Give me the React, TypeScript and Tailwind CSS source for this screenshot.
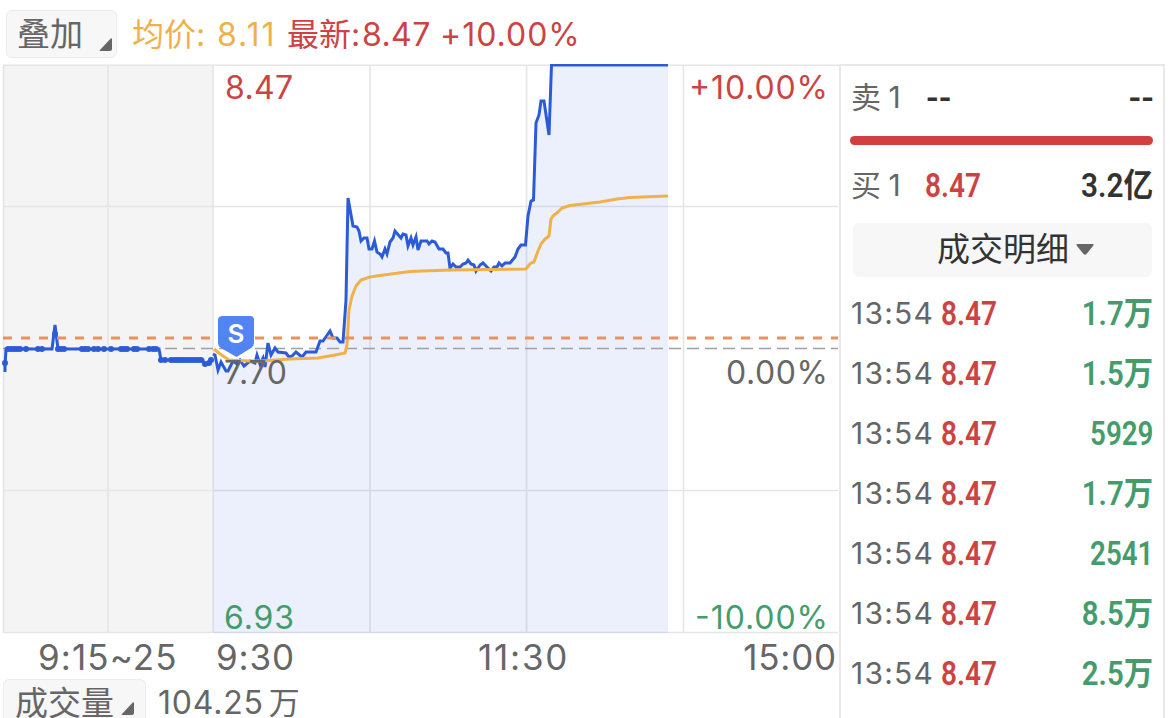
import { clsx } from "clsx";

const trades = [
    { time: "13:54", price: "8.47", volume: "1.7万" },
    { time: "13:54", price: "8.47", volume: "1.5万" },
    { time: "13:54", price: "8.47", volume: "5929" },
    { time: "13:54", price: "8.47", volume: "1.7万" },
    { time: "13:54", price: "8.47", volume: "2541" },
    { time: "13:54", price: "8.47", volume: "8.5万" },
    { time: "13:54", price: "8.47", volume: "2.5万" },
];

const auctionLine =
    "5,372 5,366 6,349 52,349 55,325 58,349 159,349 161,360 203,360 204,364 209,364 212,359";

const priceLine =
    "213,354 215,355 218,370 221,362 226,371 228,371 233,361 237,364 240,360 244,366 250,361 255,363 257,355 260,364 263,358 265,367 268,343 271,355 275,348 278,352 286,353 289,357 292,356 296,352 302,357 306,352 316,352 320,341 323,341 330,331 333,338 337,338 340,342 343,342 346,300 348,198 353,226 357,227 359,231 361,241 364,238 367,238 369,249 372,249 374.5,241 377,252 380,254 382,257 385,249 387,254 390,242 393,238 395,231 401,238 403,234 406,235 408,246 411,238 413,245 416,237 418,250 421,241 427,241 429,244 432,241 435,242 439,249 443,249 446,253 448,253 450,268 453,264 456,267 460,267 463,264 466,263 468,260 471,264 474,265 476,271 480,265 483,263 486,266 491,271 494,267 497,267 499,263 502,266 505,263 510,263 515,257 518,249 521,245 525.5,245 528,216 531,201 533.5,200 536,123 539,115 541,101 544,101 549,135 551.5,65 668,65";

const averageLine =
    "214,349 220,354 229,360 250,361 262,361 290,359 318,358 335,355 345,353 347,345 349,310 352,296 356,286 361,280 370,277 380,275.5 410,271.5 450,270 526,269 529,265 531,263 534,262 538,251 541,244 545,239 549,236 551,219 553,216 558,212 562,208 570,205.5 600,202 617,199 630,197.5 668,196";

// [x, y] of every auction tick
const ticks = [
    [5, 363], [8, 349], [11, 349], [14, 349], [17, 349], [20, 349], [26, 349], [38, 349], [42, 349],
    [55, 334], [58, 349], [61, 349], [64, 349], [82, 349], [85, 349], [88, 349], [94, 349], [98, 349],
    [104, 349], [111, 349], [121, 349], [124, 349], [127, 349], [134, 349], [137, 349], [149, 349],
    [153, 349], [156, 349], [161, 360], [165, 360], [171, 360], [174, 360], [177, 360], [180, 360],
    [183, 360], [186, 360], [189, 360], [192, 360], [195, 360], [198, 360], [201, 360], [205, 364],
    [209, 363], [211, 360],
];

function Corner({ className }: { className?: string }) {
    return (
        <svg viewBox="0 0 13 13" className={clsx("h-[13px] w-[13px]", className)}>
            <path d="M13 1v10a2 2 0 0 1-2 2H1.5Q0 13 1 12L11.500.7Q13-.5 13 1Z" fill="#666" />
        </svg>
    );
}

function Chart() {
    return (
        <svg viewBox="0 64 839 570" className="block h-[570px] w-[839px] shrink-0 font-['Inter',sans-serif]">
            <rect x="3" y="65" width="210" height="568" fill="#f4f4f4" />

            <g stroke="#e5e5e5" strokeWidth="1.6">
                <path d="M3 65.200H840M3 206.500H838M3 490.500H838M3 632.500H838" />
                <path d="M3.500 65V633M108 65V633M213 65V633M370 65V633M526.500 65V633M683.500 65V633" />
            </g>

            <polygon points={`213,633 ${priceLine} 668,633`} fill="#4169e1" fillOpacity="0.1" />

            <path d="M3 348.500H838" stroke="#a0a0a0" strokeWidth="1.500" strokeDasharray="12 6" />

            <g fill="none" stroke="#2b5cd6" strokeWidth="3">
                <polyline points={auctionLine} />
                <polyline points={priceLine} />
            </g>
            {ticks.map(([x, y], i) => (
                <circle key={i} cx={x} cy={y} r="3" fill="#2b5cd6" />
            ))}
            <polyline points={averageLine} fill="none" stroke="#f0b14a" strokeWidth="3" strokeLinejoin="round" />
            <path d="M3 338H838" stroke="#e8935f" strokeWidth="2.800" strokeDasharray="9 9" />

            {/* Sell marker */}
            <path d="M223 316H250Q254 316 254 320V343Q254 346 251 348L236.500 357L221 348Q218 346 218 343V320Q218 316 223 316Z" fill="#4c7ff5" fillOpacity="0.96" />
            <text x="236" y="343" textAnchor="middle" fontSize="26" fontWeight="600" fill="#fff">S</text>

            {/* Scale labels */}
            <g fontSize="32">
                <text x="225" y="98.500" textLength="68" fill="#cd4343">8.47</text>
                <text x="224" y="383.500" textLength="63" fill="#666">7.70</text>
                <text x="224" y="628.500" textLength="70" fill="#449c6c">6.93</text>
                <text x="689" y="98.500" textLength="139" fill="#cd4343">+10.00%</text>
                <text x="726" y="383.500" textLength="102" fill="#666">0.00%</text>
                <text x="695" y="628.500" textLength="133" fill="#449c6c">-10.00%</text>
            </g>
        </svg>
    );
}

export default function App() {
    return (
        <div className="flex h-[718px] w-[1170px] flex-col overflow-hidden bg-white font-['Inter','Noto_Sans_CJK_SC',sans-serif] text-[#666]">
            <header className="flex h-16 shrink-0 items-start pt-[10px] pl-[6px]">
                <button className="flex h-[48px] w-[111px] items-center rounded-md border border-[#ececec] bg-[#f7f7f7] pl-[10px]">
                    <span className="text-[33px] leading-none whitespace-nowrap">叠加</span>
                    <Corner className="mt-[21px] ml-[16px]" />
                </button>
                <div className="ml-[15px] flex h-[49px] items-center text-[32px] leading-none whitespace-nowrap">
                    <span className="w-[85px] text-[#efb04b]">均价:</span>
                    <span className="w-[70px] tracking-[2px] text-[#efb04b]">8.11</span>
                    <span className="w-[75px] text-[#cd4343]">最新:</span>
                    <span className="w-[78px] tracking-[0.4px] text-[#cd4343]">8.47</span>
                    <span className="tracking-[1px] text-[#cd4343]">+10.00%</span>
                </div>
            </header>

            <div className="flex min-h-0 flex-1">
                <main className="flex w-[839px] shrink-0 flex-col overflow-hidden">
                    <Chart />
                    <div className="flex h-[46px] shrink-0 items-center pl-[38px] text-[35px] leading-none whitespace-nowrap">
                        <span className="w-[178px] tracking-[1.1px]">9:15~25</span>
                        <span className="w-[262px] tracking-[0.9px]">9:30</span>
                        <span className="tracking-[1.8px]">11:30</span>
                        <span className="mr-[2px] ml-auto tracking-[0.8px]">15:00</span>
                    </div>
                    <div className="-mt-px flex shrink-0 items-start pl-[3px]">
                        <button className="flex h-[48px] w-[143px] items-center rounded-md border border-[#ececec] bg-[#f7f7f7] pl-[11px]">
                            <span className="text-[33px] leading-none whitespace-nowrap">成交量</span>
                            <Corner className="mt-[11px] ml-[7px]" />
                        </button>
                        <span className="ml-3 flex h-[47px] items-center text-[32px] leading-none tracking-[0.8px] whitespace-nowrap">
                            104.25<span className="ml-[5px] text-[31px]">万</span>
                        </span>
                    </div>
                </main>

                <aside className="flex w-[326px] shrink-0 flex-col border-x-2 border-t-2 border-[#e8e8e8] pr-[11px] pl-[10px]">
                    <div className="flex h-[62px] items-center text-[30px] leading-none">
                        <span className="w-[75px] tracking-[-0.5px] whitespace-nowrap">卖 1</span>
                        <span className="origin-left scale-x-[1.02] font-['Roboto'] text-[34px] font-semibold text-[#333]">--</span>
                        <span className="-mr-[2px] ml-auto origin-right scale-x-[1.02] font-['Roboto'] text-[34px] font-semibold text-[#333]">--</span>
                    </div>
                    <div className="-ml-px mt-[8px] h-[9px] w-[303px] rounded-full bg-[#d04040]" />
                    <div className="mt-[10px] flex h-[60px] items-center text-[30px] leading-none">
                        <span className="w-[74px] tracking-[-0.5px] whitespace-nowrap">买 1</span>
                        <span className="origin-left scale-x-[.85] font-['Roboto'] text-[33px] font-semibold text-[#cd4343]">8.47</span>
                        <span className="-mr-px ml-auto origin-right scale-x-[.9] font-['Roboto','Noto_Sans_CJK_SC'] text-[33px] font-semibold text-[#333]">3.2亿</span>
                    </div>
                    <button className="mt-[8px] ml-[2px] flex h-[54px] w-[299px] shrink-0 items-center justify-center rounded-md bg-[#f7f7f7] pb-[1px] pl-[26px] text-[33px] leading-none text-[#333]">
                        成交明细
                        <svg viewBox="0 0 18 11" className="ml-[7px] h-[11px] w-[18px]">
                            <path d="M1.500 0H16.500Q18.500 0 17 2L10.500 10Q9 11.500 7.500 10L1 2Q-.5 0 1.500 0Z" fill="#666" />
                        </svg>
                    </button>
                    <div className="mt-[6px] flex flex-col">
                        {trades.map((trade, i) => (
                            <div key={i} className="flex h-[60px] shrink-0 items-center leading-none whitespace-nowrap">
                                <span className="w-[90px] text-[30px] tracking-[1.2px]">{trade.time}</span>
                                <span className="origin-left scale-x-[.85] font-['Roboto'] text-[33px] font-semibold text-[#cd4343]">{trade.price}</span>
                                <span
                                    className={clsx(
                                        "-mr-px ml-auto origin-right font-['Roboto','Noto_Sans_CJK_SC'] text-[33px] font-semibold text-[#449c6c]",
                                        trade.volume.endsWith("万") ? "scale-x-[.89]" : "scale-x-[.84]"
                                    )}
                                >
                                    {trade.volume}
                                </span>
                            </div>
                        ))}
                    </div>
                </aside>
            </div>
        </div>
    );
}
